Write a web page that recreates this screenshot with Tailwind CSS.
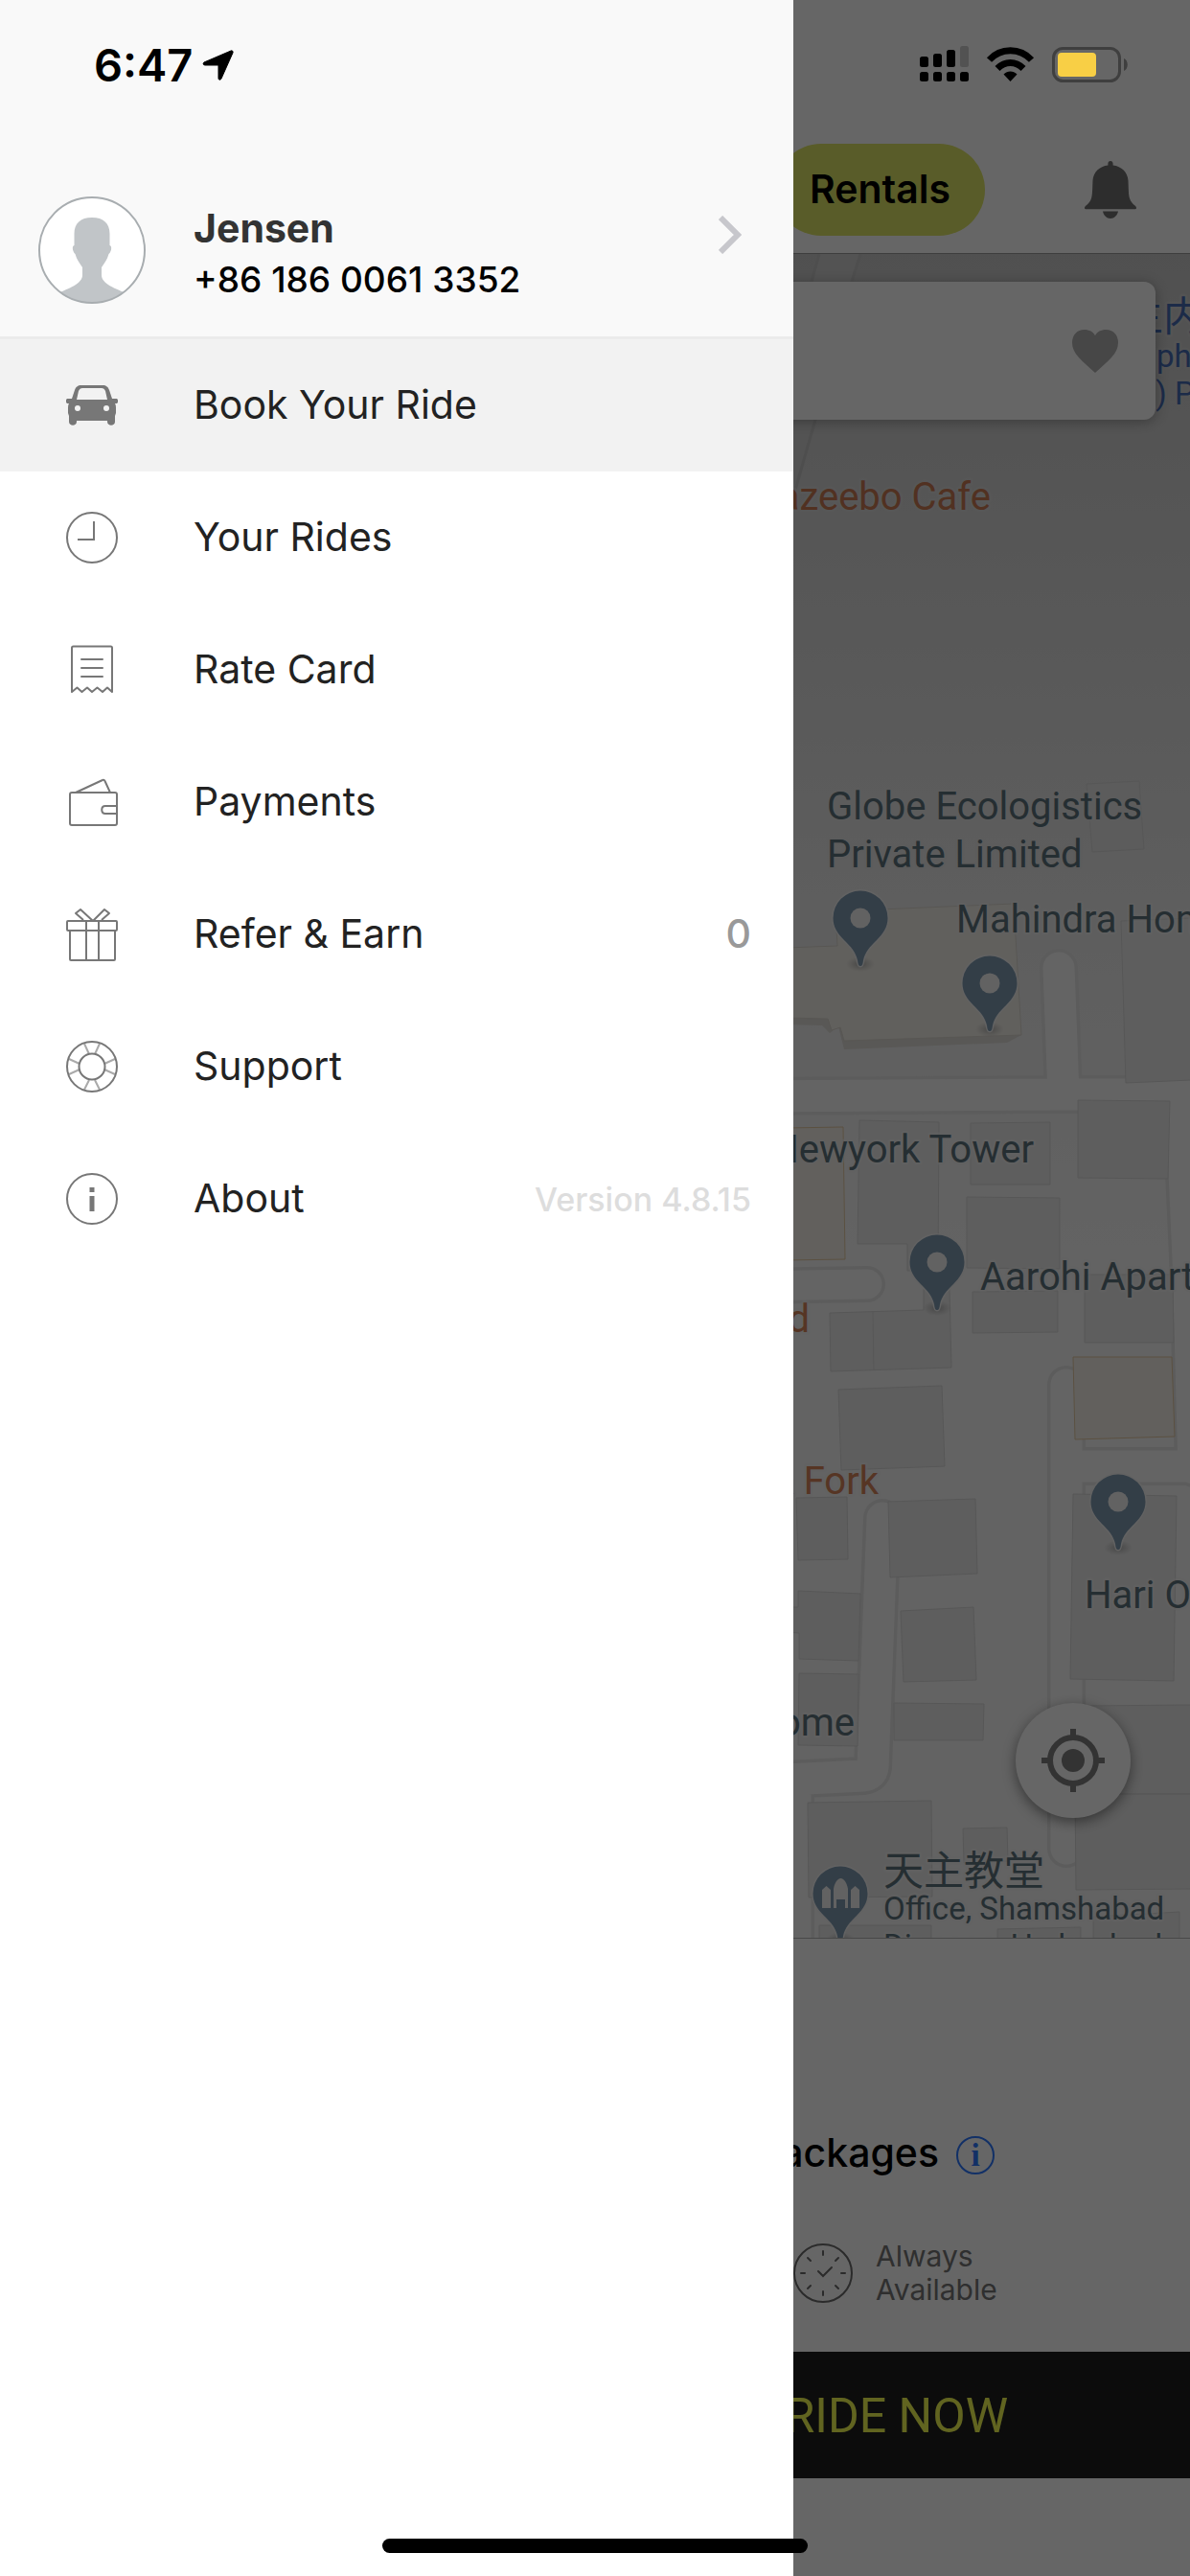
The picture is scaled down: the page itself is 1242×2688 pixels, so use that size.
<!DOCTYPE html>
<html lang="en">
<head>
<meta charset="utf-8">
<meta name="viewport" content="width=device-width, initial-scale=1">
<title>Book Your Ride</title>
<script src="https://cdn.jsdelivr.net/npm/@tailwindcss/browser@4"></script>
</head>
<body class="bg-white font-['Inter','Noto_Sans_CJK_SC',sans-serif] text-black">
<div class="relative flex min-h-screen flex-col overflow-hidden">

  <!-- Booking screen behind the drawer -->
  <header class="flex items-center justify-end gap-[104px] border-b border-[#9b9b9b] bg-white pt-[150px] pr-14 pb-[18px]">
    <button class="h-24 rounded-full bg-[#dfe566] px-9 text-[41px] font-semibold">Rentals</button>
    <button aria-label="Notifications">
      <svg class="block h-[60px] w-[54px]" viewBox="0 0 54 56" preserveAspectRatio="none" fill="#707070"><path d="M27 0c1.600 0 2.600 1 2.600 2.600v1.600C38.500 5 45 11 45.500 19c.4 9 .3 14 1.500 17.500 1.200 3.500 3 5 5.500 7 2.500 2 1.500 3.500 0 3.500H1.500c-1.500 0-2.500-1.500 0-3.500s4.300-3.500 5.500-7C8.200 33 8.100 28 8.500 19 9 11 15.500 5 24.400 4.200V2.600C24.400 1 25.400 0 27 0zM19 49h16c-.8 4-4 7-8 7s-7.200-3-8-7z"/></svg>
    </button>
  </header>

  <section class="relative flex flex-1 flex-col justify-between overflow-hidden">
    <svg class="absolute inset-0 h-full w-full" viewBox="0 265 1242 1757" preserveAspectRatio="xMaxYMin slice" role="img" aria-label="Map">
      <defs>
        <linearGradient id="land" gradientUnits="userSpaceOnUse" x1="0" y1="265" x2="0" y2="1300">
          <stop offset="0" stop-color="#c9c9c9"/><stop offset=".3" stop-color="#d8d8d8"/><stop offset=".62" stop-color="#e9e9e9"/><stop offset="1" stop-color="#f7f7f7"/>
        </linearGradient>
        <radialGradient id="pinshade"><stop offset="0" stop-color="#777" stop-opacity=".55"/><stop offset="1" stop-color="#999" stop-opacity="0"/></radialGradient>
        <g id="pinbody">
          <ellipse cx="0" cy="48" rx="15" ry="8" fill="url(#pinshade)"/>
          <path d="M0 50c-2 0-2.500-2-3-6C-5 35-10 30-17 23-24 16-28.500 9-28.500 0a28.500 28.500 0 0 1 57 0C28.500 9 24 16 17 23 10 30 5 35 3 44c-.5 4-1 6-3 6z" fill="#809bb2" stroke="#f4f4f4" stroke-width="3" paint-order="stroke"/>
        </g>
        <g id="pin"><use href="#pinbody"/><circle r="10.500" fill="#f4f4f4"/></g>
      </defs>
      <rect y="265" width="1242" height="1757" fill="url(#land)"/>
      <path d="M855 265h43l-9 29-38 144-17 67h-40z" fill="#d0d0d0"/>
      <path d="M855 265l-8 29-40 130M898 265l-9 29-38 144-23 80" stroke="#c3c3c3" stroke-width="3" fill="none"/>

      <g fill="none" stroke-linecap="round" stroke-linejoin="round">
        <g stroke="#e6e6e6">
          <path d="M780 1144l322-2h160M1110 1142l-5-132" stroke-width="40"/>
          <path d="M1236 1142v80l4 90 6 220M1246 1530h-133M1113 1445v484" stroke-width="40"/>
          <path d="M780 1342l125-2" stroke-width="38"/>
          <path d="M921 1584l-10 260c-1 6-4 8-10 9l-80 4M830 1857v180" stroke-width="40"/>
        </g>
        <g stroke="#fbfbfb">
          <path d="M780 1144l322-2h160M1110 1142l-5-132" stroke-width="33"/>
          <path d="M1236 1142v80l4 90 6 220M1246 1530h-133M1113 1445v484" stroke-width="33"/>
          <path d="M780 1342l125-2" stroke-width="31"/>
          <path d="M921 1584l-10 260c-1 6-4 8-10 9l-80 4M830 1857v180" stroke-width="33"/>
        </g>
      </g>

      <g fill="#ebebeb" stroke="#d9d9d9" stroke-width="1">
        <path d="M1134 818l55-3 5 71-54 3z" fill="#e5e5e5"/>
        <path d="M1170 961l74-3v169l-69 3z"/>
        <path d="M897 1169l83 2-1 155h-32v-28h-52zM1013 1172l83-1v65h-83zM1125 1148l96 1-2 81-94-1zM1009 1249l97 1v74l-97-1zM1015 1348l89-1v43l-89 1zM1132 1330h92l1 71h-93z"/>
        <path d="M866 1370l98-3v-22h27l2 82-126 4zM911 1368l1 62M875 1450l108-4 3 84-108 4z"/>
        <path d="M831 1563l53-1 1 65-52 1zM927 1567l91-3 2 78-91 4zM820 1677h13v-17l65 3-2 70-62-2v-27l-14-1zM940 1681l76-4 3 76-76 2zM834 1746l62 1-1 75-62-1zM933 1777l94 1-1 38h-93z"/>
        <path d="M1120 1559l108 2-3 193-108-2zM1130 1780l114-1v93h-114zM1122 1872h122v99l-121 1zM843 1881l129-2 1 100-129 1zM1005 1908l46-1 1 35-46 2zM855 2009h117v30H855zM1041 2013l87-2v30h-87zM1141 2000l90-5v40h-90z"/>
      </g>
      <path d="M820 1062l46 1 5 10 8-2 3 14 184-5-15 8-170 7-6-24-9 7-8-8-38-1z" fill="#dedbd6"/>
      <path d="M820 989l54-2-2-36 186-8 8 137-185 6-4-14-9 3-4-12-44-1z" fill="#f3f0e9" stroke="#dcd8d0"/>
      <path d="M820 1177l60-1 2 138-62 1zM1120 1416l103 0 3 83-104 3z" fill="#f6f1e8" stroke="#e3c9a2"/>

      <use href="#pin" x="898" y="958"/>
      <use href="#pin" x="1033" y="1026"/>
      <use href="#pin" x="978" y="1317"/>
      <use href="#pin" x="1167" y="1567"/>
      <use href="#pinbody" x="877" y="1976"/>
      <path d="M858 1991v-19l4.500-4 4.500 4v19zM888 1991v-19l4.500-4 4.500 4v19zM870 1991v-20c1-6 4-11 7.500-11s6.500 5 7.500 11v20h-3v-9h-9v9z" fill="#f4f4f4"/>

      <g font-family="Roboto, 'Noto Sans CJK SC', sans-serif" font-size="40" fill="#5d737d" stroke="#f2f2f2" stroke-opacity=".6" stroke-width="5" stroke-linejoin="round" paint-order="stroke">
        <text x="1034" y="532" text-anchor="end" fill="#cb7a54" stroke="#dcdcdc">azeebo Cafe</text>
        <text x="863" y="855" stroke="#e6e6e6">Globe Ecologistics</text>
        <text x="863" y="905" stroke="#e6e6e6">Private Limited</text>
        <text x="998" y="973">Mahindra Hom</text>
        <text x="1079" y="1213" text-anchor="end">Newyork Tower</text>
        <text x="1023" y="1346">Aarohi Apart</text>
        <text x="845" y="1390" text-anchor="end" fill="#d6845a">d</text>
        <text x="917" y="1559" text-anchor="end" fill="#d6845a">&amp; Fork</text>
        <text x="1132" y="1678">Hari Om</text>
        <text x="892" y="1811" text-anchor="end">Home</text>
        <text x="922" y="1967" font-size="42">天主教堂</text>
        <g font-size="33">
          <text x="922" y="2003">Office, Shamshabad</text>
          <text x="922" y="2042">Diocese, Hyderabad</text>
        </g>
        <g fill="#466cb5" stroke="#d6d6d6">
          <text x="1172" y="345" font-size="42">主内</text>
          <text x="1207" y="383" font-size="33">pho</text>
          <text x="1188" y="422" font-size="33">n) Pr</text>
        </g>
      </g>
    </svg>

    <div class="relative mx-9 mt-[29px] flex h-36 items-center justify-end rounded-xl bg-white pr-[39px] shadow-[0_2px_14px_rgba(0,0,0,0.3)]">
      <button aria-label="Save as favourite">
        <svg class="block h-[45px] w-12" viewBox="0 0 48 43" preserveAspectRatio="none" fill="#b1b1b1"><path d="M24 43C10 31 0 24 0 13 0 5 5.500 0 12.500 0 18 0 22 2 24 6c2-4 6-6 11.500-6C42.500 0 48 5 48 13c0 11-10 18-24 30z"/></svg>
      </button>
    </div>

    <button aria-label="My location" class="relative mr-[62px] mb-[125px] flex size-[120px] items-center justify-center self-end rounded-full bg-white shadow-[0_4px_14px_rgba(0,0,0,0.45)]">
      <svg class="size-[66px]" viewBox="0 0 66 66" fill="none" stroke="#808080" stroke-width="6"><circle cx="33" cy="33" r="24"/><circle cx="33" cy="33" r="12" fill="#808080" stroke="none"/><path d="M33 0v9M33 57v9M0 33h9M57 33h9"/></svg>
    </button>
  </section>

  <section class="border-t border-[#b4b4b4] bg-white pt-[196px] pb-[47px]">
    <div class="flex h-[60px] items-center justify-end gap-[18px] pr-[204px]">
      <h2 class="pb-1.5 text-[41px] leading-[50px] font-medium">Packages</h2>
      <button aria-label="About packages">
        <svg class="block size-10" viewBox="0 0 40 40"><circle cx="20" cy="20" r="19" fill="none" stroke="#2d78ff" stroke-width="2"/><text x="20" y="31" text-anchor="middle" font-family="Liberation Serif" font-weight="700" font-size="33" fill="#2d78ff">i</text></svg>
      </button>
    </div>
    <div class="mt-[58px] ml-auto flex h-[70px] w-1/3 items-center gap-6">
      <svg class="size-[62px] shrink-0" viewBox="0 0 62 62" fill="none" stroke="#6b6b6b" stroke-width="2"><circle cx="31" cy="31" r="30"/><path d="M31 8v4M31 50v4M8 31h4M50 31h4M15 15l3 3M44 44l3 3M15 47l3-3M44 18l3-3" stroke-linecap="round"/><path d="M26 29l5 5 9-9" stroke-linecap="round"/></svg>
      <p class="text-[30px] leading-[35px] text-[#757575]">Always<br>Available</p>
    </div>
  </section>
  <button class="flex h-[132px] items-center justify-end bg-[#202020] pt-0.5 pr-[190px] font-['Roboto',sans-serif] text-[50px] text-[#f2fa52]">RIDE NOW</button>
  <div class="h-[102px] bg-white"></div>

  <div class="absolute inset-0 bg-black/60"></div>

  <!-- Navigation drawer -->
  <aside class="absolute inset-y-0 left-0 w-2/3 bg-white">
    <a href="#profile" class="flex h-[354px] items-end border-b-[3px] border-[#ebebeb] bg-[#f9f9f9] pr-[54px] pb-8 pl-10">
      <svg class="mr-[50px] mb-0.5 size-28 shrink-0" viewBox="0 0 112 112"><defs><clipPath id="face"><circle cx="56" cy="56" r="55"/></clipPath></defs><circle cx="56" cy="56" r="55" fill="#fff"/><path clip-path="url(#face)" fill="#c1c5c8" d="M56 22c12 0 18.500 6 18.500 17v12c3 1 1.500 7-1 9-1.500 6-5 10-7.500 14v8c0 9 14 14 28 20v12H18v-12c14-6 28-11 28-20v-8c-2.500-4-6-8-7.500-14-2.500-2-4-8-1-9V39c0-11 6.500-17 18.500-17z"/><circle cx="56" cy="56" r="55" fill="none" stroke="#a8adb0" stroke-width="2"/></svg>
      <span class="flex flex-1 flex-col">
        <span class="text-[41px] leading-[54px] font-bold text-[#333]">Jensen</span>
        <span class="text-[37px] leading-[54px] font-medium">+86 186 0061 3352</span>
      </span>
      <svg class="mb-[54px] h-10 w-6" viewBox="0 0 24 40" fill="none" stroke="#c7c7cc" stroke-width="6"><path d="M2 2l18 18L2 38"/></svg>
    </a>

    <nav class="text-[41px] text-[#222]">
      <a href="#book" class="flex h-[138px] items-center gap-[50px] bg-[#f2f2f2] pr-11 pl-10">
        <span class="flex w-28 justify-center"><svg class="size-[54px]" viewBox="0 0 54 54" fill="#777"><path fill-rule="evenodd" d="M16 6h22c4 0 6 2 7 5l3 9h4c3 0 3 5 0 5h-1c1 2 1 3 1 6v4l-1 3v6c0 5-8 5-8 0v-1H11v1c0 5-8 5-8 0v-6l-1-3v-4c0-3 0-4 1-6H2c-3 0-3-5 0-5h4l3-9c1-3 3-5 7-5zm1 3c-2 0-3 1-4 3l-2 9h32l-2-9c-1-2-2-3-4-3zM12 27a3 3 0 1 0 0 6 3 3 0 0 0 0-6zm30 0a3 3 0 1 0 0 6 3 3 0 0 0 0-6z"/></svg></span>
        Book Your Ride
      </a>
      <a href="#rides" class="flex h-[138px] items-center gap-[50px] pr-11 pl-10">
        <span class="flex w-28 justify-center"><svg class="size-[54px]" viewBox="0 0 54 54" fill="none" stroke="#777" stroke-width="2"><circle cx="27" cy="27" r="26"/><path d="M29 10v19H12"/></svg></span>
        Your Rides
      </a>
      <a href="#rates" class="flex h-[138px] items-center gap-[50px] pr-11 pl-10">
        <span class="flex w-28 justify-center"><svg class="size-[54px]" viewBox="0 0 54 54" fill="none" stroke="#777" stroke-width="2" stroke-linejoin="round" stroke-linecap="round"><path d="M6 50V4c0-1 .5-1.500 1.500-1.500h39c1 0 1.500.5 1.500 1.500v46l-5-4.500-5 4.500-5.500-4.500-5.500 4.500-5-4.500-5.500 4.500-5-4.500zM16 16h22M16 25h22M16 34h22"/></svg></span>
        Rate Card
      </a>
      <a href="#payments" class="flex h-[138px] items-center gap-[50px] pr-11 pl-10">
        <span class="flex w-28 justify-center"><svg class="size-[54px]" viewBox="0 0 54 54" fill="none" stroke="#777" stroke-width="2" stroke-linejoin="round"><rect x="4" y="17" width="49" height="34" rx="2"/><path d="M53 31H41c-5 0-5 8 0 8h12M10 17l28-13c1-.5 2 0 2.500 1L46 17"/></svg></span>
        Payments
      </a>
      <a href="#refer" class="flex h-[138px] items-center gap-[50px] pr-11 pl-10">
        <span class="flex w-28 justify-center"><svg class="h-14 w-[54px]" viewBox="0 0 54 56" fill="none" stroke="#777" stroke-width="2" stroke-linejoin="round"><rect x="1" y="14" width="52" height="10" rx="1"/><path d="M4 24v30c0 1 .5 1 1 1h45c.5 0 1 0 1-1V24M21 14v41M34 14v41M18 13l-8-7 5-4 13 12 12-12 5 4-8 7"/></svg></span>
        Refer &amp; Earn
        <span class="ml-auto font-medium text-[#999]">0</span>
      </a>
      <a href="#support" class="flex h-[138px] items-center gap-[50px] pr-11 pl-10">
        <span class="flex w-28 justify-center"><svg class="size-[54px]" viewBox="0 0 54 54" fill="none" stroke="#777" stroke-width="2"><path stroke="#aaa" d="M19 3l5 11M35 3l-5 11M19 51l5-10M35 51l-5-10M3 19l11 5M3 35l11-5M51 19l-11 5M51 35l-11-5"/><circle cx="27" cy="27" r="26"/><circle cx="27" cy="27" r="13.500"/></svg></span>
        Support
      </a>
      <a href="#about" class="flex h-[138px] items-center gap-[50px] pr-11 pl-10">
        <span class="flex w-28 justify-center"><svg class="size-[54px]" viewBox="0 0 54 54" fill="none" stroke="#777" stroke-width="2"><circle cx="27" cy="27" r="26"/><path d="M27 15v5M27 24v16" stroke-width="5"/></svg></span>
        About
        <span class="ml-auto text-[34px] font-medium text-[#ddd]">Version 4.8.15</span>
      </a>
    </nav>
  </aside>

  <!-- System status bar and home indicator -->
  <div class="absolute inset-x-0 top-0 flex h-[136px] items-center justify-between pr-[65px] pl-[98px]">
    <div class="flex items-center gap-[10px] text-[47px] font-semibold">6:47
      <svg class="size-[33px]" viewBox="0 0 33 33"><path d="M2 13L30 1c1.500-.5 2.500.5 2 2L20 30c-1 2-3 1.500-3-.5V16H3c-2 0-2.500-2-1-3z" fill="#000" stroke="#000"/></svg>
    </div>
    <svg class="h-[46px] w-[217px]" viewBox="960 45 217 46" aria-label="Signal, Wi-Fi and battery">
      <rect x="960" y="59" width="9" height="11" rx="2.500"/><rect x="974" y="56" width="9" height="14" rx="2.500"/><rect x="988" y="52" width="9" height="18" rx="2.500"/><rect x="1002" y="48" width="9" height="22" rx="2.500" fill="#525252"/>
      <rect x="960" y="75" width="9" height="10" rx="2.500"/><rect x="974" y="75" width="9" height="10" rx="2.500"/><rect x="988" y="75" width="9" height="10" rx="2.500"/><rect x="1002" y="75" width="9" height="10" rx="2.500"/>
      <g fill="none" stroke="#000" stroke-width="7"><path d="M1032.500 62.500c12-13 32-13 44 0"/><path d="M1041 71.500c8-8 19-8 27 0"/></g><path d="M1047.500 77.500c4-4 10-4 14 0l-7 7.500z"/>
      <rect x="1099.500" y="50.500" width="69" height="34" rx="10" fill="none" stroke="#3f3f3f" stroke-width="3"/><rect x="1104" y="55" width="40" height="25" rx="4" fill="#f8cf45"/><path d="M1173 61c5 2 5 11 0 13z" fill="#3f3f3f"/>
    </svg>
  </div>
  <div class="absolute bottom-6 left-1/2 h-[15px] w-[444px] -translate-x-1/2 rounded-full bg-black"></div>
</div>
</body>
</html>
